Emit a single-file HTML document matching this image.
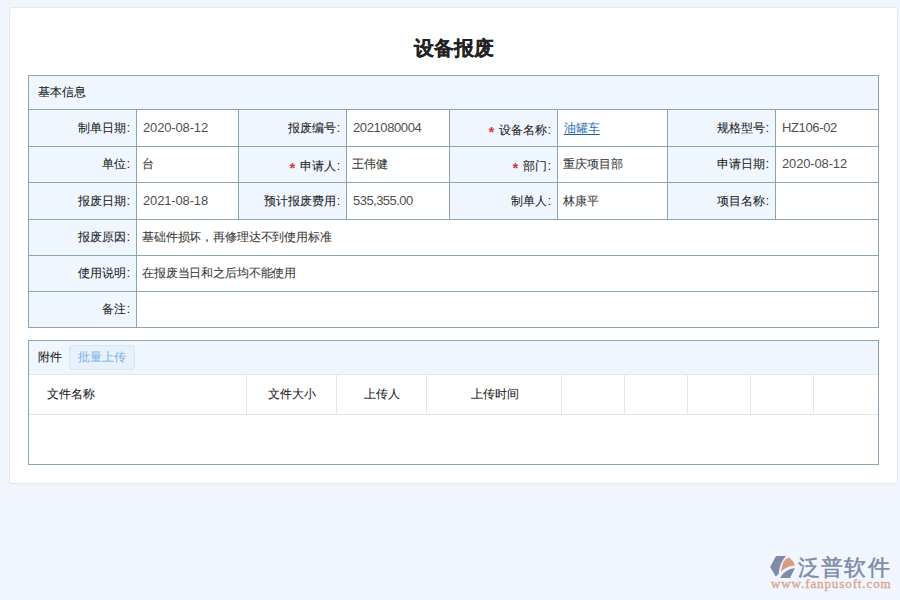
<!DOCTYPE html><html><head><meta charset="utf-8"><style>
*{margin:0;padding:0;box-sizing:border-box}
html,body{width:900px;height:600px;overflow:hidden;background:#f1f5fd;font-family:"Liberation Sans",sans-serif;}
.a{position:absolute}
.card{left:9px;top:7px;width:889px;height:477px;background:#fff;border:1px solid #e5e9ef;border-radius:3px}
.t{position:absolute;white-space:nowrap;font-size:13px;line-height:16px}
.lb{color:#1e1e1e;text-align:right;font-size:12px}
.cj{font-size:12px}
.cj,.lb{-webkit-text-stroke:0.08px currentColor}
.vl{color:#505050}
.vl.cj{color:#3a3a3a;letter-spacing:-0.15px}
.hl{background:#88a5b1}
.vline{position:absolute;width:1px;background:#88a5b1}
.hline{position:absolute;height:1px;background:#88a5b1}
</style></head><body><div class="a card"></div>
<div class="t cj" style="left:0;width:907px;top:37px;font-size:20px;line-height:22px;font-weight:bold;color:#222;text-align:center">设备报废</div>
<div class="a" style="left:28px;top:75px;width:851px;height:253px;background:#fff"></div>
<div class="a" style="left:28px;top:75px;width:851px;height:34px;background:#eff6fe"></div>
<div class="a" style="left:28px;top:109px;width:108px;height:37px;background:#eff6fe"></div>
<div class="a" style="left:238px;top:109px;width:108px;height:37px;background:#eff6fe"></div>
<div class="a" style="left:449px;top:109px;width:108px;height:37px;background:#eff6fe"></div>
<div class="a" style="left:667px;top:109px;width:108px;height:37px;background:#eff6fe"></div>
<div class="a" style="left:28px;top:146px;width:108px;height:36px;background:#eff6fe"></div>
<div class="a" style="left:238px;top:146px;width:108px;height:36px;background:#eff6fe"></div>
<div class="a" style="left:449px;top:146px;width:108px;height:36px;background:#eff6fe"></div>
<div class="a" style="left:667px;top:146px;width:108px;height:36px;background:#eff6fe"></div>
<div class="a" style="left:28px;top:182px;width:108px;height:37px;background:#eff6fe"></div>
<div class="a" style="left:238px;top:182px;width:108px;height:37px;background:#eff6fe"></div>
<div class="a" style="left:449px;top:182px;width:108px;height:37px;background:#eff6fe"></div>
<div class="a" style="left:667px;top:182px;width:108px;height:37px;background:#eff6fe"></div>
<div class="a" style="left:28px;top:219px;width:108px;height:36px;background:#eff6fe"></div>
<div class="a" style="left:28px;top:255px;width:108px;height:36px;background:#eff6fe"></div>
<div class="a" style="left:28px;top:291px;width:108px;height:36px;background:#eff6fe"></div>
<div class="hline" style="left:28px;top:75px;width:851px"></div>
<div class="hline" style="left:28px;top:109px;width:851px"></div>
<div class="hline" style="left:28px;top:146px;width:851px"></div>
<div class="hline" style="left:28px;top:182px;width:851px"></div>
<div class="hline" style="left:28px;top:219px;width:851px"></div>
<div class="hline" style="left:28px;top:255px;width:851px"></div>
<div class="hline" style="left:28px;top:291px;width:851px"></div>
<div class="hline" style="left:28px;top:327px;width:851px"></div>
<div class="vline" style="left:28px;top:75px;height:253px"></div>
<div class="vline" style="left:878px;top:75px;height:253px"></div>
<div class="vline" style="left:136px;top:109px;height:218px"></div>
<div class="vline" style="left:238px;top:109px;height:110px"></div>
<div class="vline" style="left:346px;top:109px;height:110px"></div>
<div class="vline" style="left:449px;top:109px;height:110px"></div>
<div class="vline" style="left:557px;top:109px;height:110px"></div>
<div class="vline" style="left:667px;top:109px;height:110px"></div>
<div class="vline" style="left:775px;top:109px;height:110px"></div>
<div class="t cj" style="left:38px;top:84px;color:#222">基本信息</div>
<div class="t lb" style="left:28px;width:102px;top:119.5px">制单日期<span style="margin-left:1px">:</span></div>
<div class="t vl" style="left:143px;top:119.5px;letter-spacing:-0.15px">2020-08-12</div>
<div class="t lb" style="left:238px;width:102px;top:119.5px">报废编号<span style="margin-left:1px">:</span></div>
<div class="t vl" style="left:353px;top:119.5px;letter-spacing:-0.4px">2021080004</div>
<div class="t lb" style="left:449px;width:102px;top:121.5px"><span style="position:relative">设备名称<span style="margin-left:1px">:</span><span style="position:absolute;left:-10px;top:1px;color:#d9363e;font-size:14px;font-weight:bold">*</span></span></div>
<div class="t vl cj" style="left:564px;top:119.5px;color:#2d72b8;text-decoration:underline;text-decoration-color:#1f5f9f;text-underline-offset:2px">油罐车</div>
<div class="t lb" style="left:667px;width:102px;top:119.5px">规格型号<span style="margin-left:1px">:</span></div>
<div class="t vl" style="left:782px;top:119.5px;letter-spacing:-0.36px">HZ106-02</div>
<div class="t lb" style="left:28px;width:102px;top:156.0px">单位<span style="margin-left:1px">:</span></div>
<div class="t vl cj" style="left:142px;top:156.0px;letter-spacing:0px">台</div>
<div class="t lb" style="left:238px;width:102px;top:158.0px"><span style="position:relative">申请人<span style="margin-left:1px">:</span><span style="position:absolute;left:-10px;top:1px;color:#d9363e;font-size:14px;font-weight:bold">*</span></span></div>
<div class="t vl cj" style="left:352px;top:156.0px;letter-spacing:0px">王伟健</div>
<div class="t lb" style="left:449px;width:102px;top:158.0px"><span style="position:relative">部门<span style="margin-left:1px">:</span><span style="position:absolute;left:-10px;top:1px;color:#d9363e;font-size:14px;font-weight:bold">*</span></span></div>
<div class="t vl cj" style="left:563px;top:156.0px;letter-spacing:0px">重庆项目部</div>
<div class="t lb" style="left:667px;width:102px;top:156.0px">申请日期<span style="margin-left:1px">:</span></div>
<div class="t vl" style="left:782px;top:156.0px;letter-spacing:-0.15px">2020-08-12</div>
<div class="t lb" style="left:28px;width:102px;top:192.5px">报废日期<span style="margin-left:1px">:</span></div>
<div class="t vl" style="left:143px;top:192.5px;letter-spacing:-0.15px">2021-08-18</div>
<div class="t lb" style="left:238px;width:102px;top:192.5px">预计报废费用<span style="margin-left:1px">:</span></div>
<div class="t vl" style="left:353px;top:192.5px;letter-spacing:-0.54px">535,355.00</div>
<div class="t lb" style="left:449px;width:102px;top:192.5px">制单人<span style="margin-left:1px">:</span></div>
<div class="t vl cj" style="left:563px;top:192.5px;letter-spacing:0px">林康平</div>
<div class="t lb" style="left:667px;width:102px;top:192.5px">项目名称<span style="margin-left:1px">:</span></div>
<div class="t vl" style="left:782px;top:192.5px;letter-spacing:0px"></div>
<div class="t lb" style="left:28px;width:102px;top:229.0px">报废原因<span style="margin-left:1px">:</span></div>
<div class="t vl cj" style="left:142px;top:229.0px">基础件损坏，再修理达不到使用标准</div>
<div class="t lb" style="left:28px;width:102px;top:265.0px">使用说明<span style="margin-left:1px">:</span></div>
<div class="t vl cj" style="left:142px;top:265.0px">在报废当日和之后均不能使用</div>
<div class="t lb" style="left:28px;width:102px;top:301.0px">备注<span style="margin-left:1px">:</span></div>
<div class="a" style="left:28px;top:340px;width:851px;height:125px;background:#fff;border:1px solid #88a5b1"></div>
<div class="a" style="left:29px;top:341px;width:849px;height:33px;background:#eff6fe"></div>
<div class="a" style="left:29px;top:374px;width:849px;height:1px;background:#e3e7eb"></div>
<div class="a" style="left:29px;top:414px;width:849px;height:1px;background:#e3e7eb"></div>
<div class="a" style="left:246px;top:375px;width:1px;height:39px;background:#e3e7eb"></div>
<div class="a" style="left:336px;top:375px;width:1px;height:39px;background:#e3e7eb"></div>
<div class="a" style="left:426px;top:375px;width:1px;height:39px;background:#e3e7eb"></div>
<div class="a" style="left:561px;top:375px;width:1px;height:39px;background:#e3e7eb"></div>
<div class="a" style="left:624px;top:375px;width:1px;height:39px;background:#e3e7eb"></div>
<div class="a" style="left:687px;top:375px;width:1px;height:39px;background:#e3e7eb"></div>
<div class="a" style="left:750px;top:375px;width:1px;height:39px;background:#e3e7eb"></div>
<div class="a" style="left:813px;top:375px;width:1px;height:39px;background:#e3e7eb"></div>
<div class="t cj" style="left:38px;top:349px;color:#222">附件</div>
<div class="a" style="left:69px;top:345px;width:66px;height:25px;background:#e6f1fc;border:1px solid #d6e6f5;border-radius:4px"></div>
<div class="t cj" style="left:69px;width:66px;top:349px;color:#7fb4e4;text-align:center">批量上传</div>
<div class="t cj" style="left:47px;top:386px;color:#222">文件名称</div>
<div class="t cj" style="left:247px;width:90px;top:386px;color:#222;text-align:center">文件大小</div>
<div class="t cj" style="left:337px;width:90px;top:386px;color:#222;text-align:center">上传人</div>
<div class="t cj" style="left:427px;width:135px;top:386px;color:#222;text-align:center">上传时间</div>
<svg class="a" style="left:766px;top:552px" width="34" height="30" viewBox="0 0 34 30">
<path d="M10 4 L20 4 Q14 10 12.5 22 L9.7 24.5 L4.2 15 Z" fill="#7f8ba7"/>
<path d="M15 20 Q16 7 23 5.5 Q27 8 29 13.5 Q20 14 15 20 Z" fill="#d99b82"/>
<path d="M14 26 L24 26 L29 16 Q19 17 14 26 Z" fill="#7f8ba7"/>
</svg>
<div class="t cj" style="left:798px;top:555px;font-size:22px;line-height:26px;color:#7f8ca9;-webkit-text-stroke:0.5px #7f8ca9;letter-spacing:1.2px">泛普软件</div>
<div class="t cj" style="left:771px;top:577px;font-family:'Liberation Serif',serif;font-size:13px;line-height:14px;color:#d9a48f;-webkit-text-stroke:0.3px #d9a48f;letter-spacing:0.9px">www.fanpusoft.com</div></body></html>
